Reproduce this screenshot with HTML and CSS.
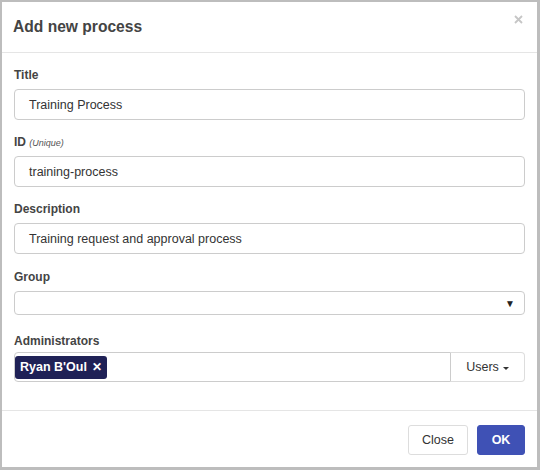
FILE: index.html
```html
<!DOCTYPE html>
<html>
<head>
<meta charset="utf-8">
<link rel="stylesheet" href="styles.css">
</head>
<body>
<div class="window">
  <div class="modal-header">
    <h4 class="modal-title">Add new process</h4>
    <span class="close-x"><svg width="9" height="9" viewBox="0 0 9 9"><path d="M1 1L8 8M8 1L1 8" stroke="#c6c6c6" stroke-width="1.8" fill="none"/></svg></span>
  </div>
  <div class="modal-body">
    <div class="form-group">
      <label class="label">Title</label>
      <div class="input">Training Process</div>
    </div>
    <div class="form-group">
      <label class="label">ID <small class="hint">(Unique)</small></label>
      <div class="input">training-process</div>
    </div>
    <div class="form-group desc">
      <label class="label">Description</label>
      <div class="input">Training request and approval process</div>
    </div>
    <div class="form-group">
      <label class="label">Group</label>
      <div class="select"><span class="arrow">&#9660;</span></div>
    </div>
    <div class="form-group last">
      <label class="label admin">Administrators</label>
      <div class="input-group">
        <div class="tag-input"><span class="tag">Ryan B'Oul <span class="tag-x">&#10005;</span></span></div>
        <div class="users-btn">Users <span class="caret"></span></div>
      </div>
    </div>
  </div>
  <div class="modal-footer">
    <button class="btn btn-default">Close</button>
    <button class="btn btn-primary">OK</button>
  </div>
</div>
</body>
</html>
```

FILE: styles.css
```css
html, body {
  margin: 0;
  padding: 0;
  background: #ffffff;
}
body {
  font-family: "Liberation Sans", Arial, sans-serif;
  color: #333;
}
.window {
  box-sizing: border-box;
  width: 540px;
  height: 470px;
  border-style: solid;
  border-color: #bdbdbd;
  border-width: 2px 3px 3px 2px;
  background: #fff;
  display: flex;
  flex-direction: column;
}
.modal-header {
  height: 50px;
  flex: none;
  border-bottom: 1px solid #e5e5e5;
  display: flex;
  align-items: center;
  justify-content: space-between;
  padding: 0 14px 0 11px;
}
.modal-title {
  margin: 0;
  font-size: 15.6px;
  font-weight: bold;
  color: #444;
  line-height: 20px;
}
.close-x {
  display: flex;
  align-self: flex-start;
  margin-top: 13px;
}
.modal-body {
  padding: 13px 12px 0 12px;
  flex: 1;
}
.form-group {
  margin-bottom: 13px;
}
.form-group.desc {
  margin-bottom: 14px;
}
.form-group.last {
  padding-top: 4px;
}
.label {
  display: block;
  height: 16px;
  padding-top: 1px;
  font-size: 12px;
  font-weight: bold;
  color: #444;
  line-height: 16px;
  margin-bottom: 6px;
}
.label.admin {
  margin-bottom: 3px;
}
.hint {
  font-size: 9px;
  font-style: italic;
  font-weight: normal;
  color: #555;
}
.input {
  box-sizing: border-box;
  height: 31px;
  border: 1px solid #cccccc;
  border-radius: 4px;
  padding: 0 14px;
  font-size: 12.5px;
  color: #333;
  display: flex;
  align-items: center;
}
.select {
  box-sizing: border-box;
  height: 24px;
  border: 1px solid #cccccc;
  border-radius: 4px;
  display: flex;
  align-items: center;
  justify-content: flex-end;
  padding-right: 9px;
}
.arrow {
  font-size: 10px;
  color: #222;
}
.input-group {
  display: flex;
  height: 30px;
}
.tag-input {
  flex: 1;
  box-sizing: border-box;
  border: 1px solid #cccccc;
  border-radius: 4px 0 0 4px;
  display: flex;
  align-items: center;
}
.tag {
  background: #1f2156;
  color: #fff;
  font-weight: bold;
  font-size: 12.5px;
  border-radius: 3px;
  height: 23px;
  display: flex;
  align-items: center;
  padding: 0 5px;
}
.tag-x {
  font-size: 12px;
  font-weight: bold;
  margin-left: 5px;
}
.users-btn {
  box-sizing: border-box;
  width: 74px;
  border: 1px solid #dddddd;
  border-left: none;
  border-radius: 0 4px 4px 0;
  display: flex;
  align-items: center;
  justify-content: center;
  font-size: 12.5px;
  color: #333;
}
.caret {
  display: inline-block;
  width: 0;
  height: 0;
  border-left: 3px solid transparent;
  border-right: 3px solid transparent;
  border-top: 3px solid #333;
  margin-left: 4px;
  margin-top: 2px;
}
.modal-footer {
  flex: none;
  border-top: 1px solid #e5e5e5;
  display: flex;
  justify-content: flex-end;
  gap: 9px;
  padding: 14px 12px 12px 12px;
}
.btn {
  box-sizing: border-box;
  height: 30px;
  border-radius: 3px;
  font-family: "Liberation Sans", Arial, sans-serif;
  font-size: 12.5px;
  padding: 0;
  cursor: pointer;
}
.btn-default {
  width: 60px;
  background: #fff;
  border: 1px solid #dddddd;
  color: #333;
}
.btn-primary {
  width: 48px;
  background: #3f51b5;
  border: 1px solid #3f51b5;
  color: #fff;
  font-weight: bold;
}
```
